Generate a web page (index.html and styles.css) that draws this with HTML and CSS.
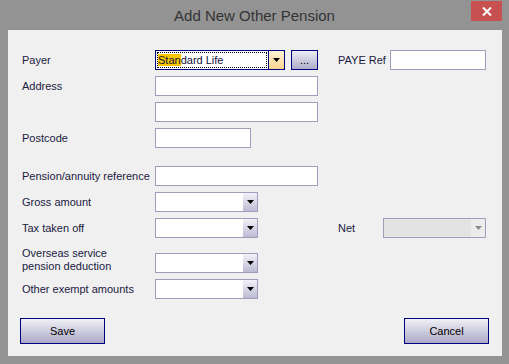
FILE: index.html
```html
<!DOCTYPE html>
<html lang="en">
<head>
  <meta charset="UTF-8">
  <title>Add New Other Pension</title>
  <link rel="stylesheet" href="styles.css">
</head>
<body>
  <div class="window">
    <div class="titlebar">
      <span></span>
      <div class="title">Add New Other Pension</div>
      <div class="close">
        <svg width="10" height="9" viewBox="0 0 10 9"><path d="M1 0.5 L9 8.5 M9 0.5 L1 8.5" stroke="#fff" stroke-width="2"/></svg>
      </div>
    </div>

    <div class="content">
      <div class="form">
        <div class="row">
          <div class="lbl">Payer</div>
          <div class="group">
            <div class="combo focus">
              <div class="combo-text"><span class="sel">Stan</span>dard Life</div>
              <div class="combo-btn hot">
                <svg width="7" height="4" viewBox="0 0 7 4"><polygon points="0,0 7,0 3.5,4" fill="#000"/></svg>
              </div>
            </div>
            <div class="dots">...</div>
          </div>
          <div class="lbl">PAYE Ref</div>
          <div class="box w96 right"></div>
        </div>

        <div class="row">
          <div class="lbl">Address</div>
          <div class="box w163"></div>
        </div>

        <div class="row">
          <div class="lbl"></div>
          <div class="box w163"></div>
        </div>

        <div class="row">
          <div class="lbl">Postcode</div>
          <div class="box w96"></div>
        </div>

        <div class="row spaced">
          <div class="lbl">Pension/annuity reference</div>
          <div class="box w163"></div>
        </div>

        <div class="row">
          <div class="lbl">Gross amount</div>
          <div class="combo w103">
            <div class="combo-text"></div>
            <div class="combo-btn">
              <svg width="7" height="4" viewBox="0 0 7 4"><polygon points="0,0 7,0 3.5,4" fill="#000"/></svg>
            </div>
          </div>
        </div>

        <div class="row">
          <div class="lbl">Tax taken off</div>
          <div class="combo w103">
            <div class="combo-text"></div>
            <div class="combo-btn">
              <svg width="7" height="4" viewBox="0 0 7 4"><polygon points="0,0 7,0 3.5,4" fill="#000"/></svg>
            </div>
          </div>
          <div class="lbl">Net</div>
          <div class="combo w103 disabled right">
            <div class="combo-text"></div>
            <div class="combo-btn">
              <svg width="7" height="4" viewBox="0 0 7 4"><polygon points="0,0 7,0 3.5,4" fill="#8c8c8c"/></svg>
            </div>
          </div>
        </div>

        <div class="row tall">
          <div class="lbl">Overseas service<br>pension deduction</div>
          <div class="combo w103 bottom">
            <div class="combo-text"></div>
            <div class="combo-btn">
              <svg width="7" height="4" viewBox="0 0 7 4"><polygon points="0,0 7,0 3.5,4" fill="#000"/></svg>
            </div>
          </div>
        </div>

        <div class="row">
          <div class="lbl">Other exempt amounts</div>
          <div class="combo w103">
            <div class="combo-text"></div>
            <div class="combo-btn">
              <svg width="7" height="4" viewBox="0 0 7 4"><polygon points="0,0 7,0 3.5,4" fill="#000"/></svg>
            </div>
          </div>
        </div>
      </div>

      <div class="footer">
        <button class="btn">Save</button>
        <button class="btn">Cancel</button>
      </div>
    </div>
  </div>
</body>
</html>
```

FILE: styles.css
```css
body {
  margin: 0;
  font-family: "Liberation Sans", Arial, sans-serif;
}

.window {
  width: 509px;
  height: 364px;
  background-color: #939393;
  display: flex;
  flex-direction: column;
}

.titlebar {
  height: 30px;
  display: grid;
  grid-template-columns: 1fr auto 1fr;
  align-items: center;
}
.title {
  font-size: 15px;
  color: #333333;
  padding-top: 1px;
}
.close {
  justify-self: end;
  align-self: start;
  margin-top: 1px;
  margin-right: 7px;
  width: 31px;
  height: 20px;
  background-color: #c75050;
  display: flex;
  align-items: center;
  justify-content: center;
}

.content {
  flex: 1;
  margin: 0 7px 8px 8px;
  background-color: #f0f0f0;
  display: flex;
  flex-direction: column;
}

.form {
  padding: 20px 0 0 14px;
  display: flex;
  flex-direction: column;
  gap: 6px;
}
.row {
  display: grid;
  grid-template-columns: 133px 183px 45px 103px;
  height: 20px;
  align-items: center;
}
.row.spaced { margin-top: 12px; }
.row.tall { height: 26px; margin-top: 3px; }

.lbl {
  font-size: 11px;
  line-height: 13px;
  color: #1a1a40;
  white-space: nowrap;
}
.row.tall .lbl { align-self: start; }

.group {
  display: flex;
  gap: 6px;
}

.box {
  box-sizing: border-box;
  height: 20px;
  background-color: #ffffff;
  border: 1px solid #a09cbc;
}
.w96 { width: 96px; }
.w163 { width: 163px; }
.w103 { width: 103px; }
.right { justify-self: end; }
.bottom { align-self: end; }

.combo {
  box-sizing: border-box;
  height: 20px;
  display: flex;
  background-color: #ffffff;
  border: 1px solid #a09cbc;
}
.combo-text {
  flex: 1;
  font-size: 11px;
  color: #10103a;
}
.combo-btn {
  width: 14px;
  display: flex;
  align-items: center;
  justify-content: center;
  background: linear-gradient(#f2f2f8, #bdbbd4);
}

.combo.focus {
  width: 130px;
  border-color: #000080;
}
.combo.focus .combo-text {
  margin: 1px;
  border: 1px dotted #000000;
  line-height: 14px;
  white-space: nowrap;
}
.combo.focus .combo-btn {
  width: 15px;
  border-left: 1px solid #000080;
  background: linear-gradient(#fff3d6, #fdd48f);
}
.sel {
  background-color: #fac800;
}

.combo.disabled {
  background-color: #e3e3e3;
}
.combo.disabled .combo-btn {
  background: #ececec;
}

.dots {
  box-sizing: border-box;
  width: 27px;
  height: 20px;
  border: 1px solid #000080;
  background: linear-gradient(#eeeef6, #aeabc9);
  font-size: 11px;
  color: #000000;
  text-align: center;
  line-height: 18px;
}

.footer {
  margin-top: auto;
  padding: 0 13px 12px 12px;
  display: flex;
  justify-content: space-between;
}
.btn {
  width: 85px;
  height: 26px;
  border: 1px solid #000080;
  background: linear-gradient(#f0f0f6, #aca9c7);
  font-family: "Liberation Sans", Arial, sans-serif;
  font-size: 11px;
  color: #000000;
  padding: 0;
}
```
